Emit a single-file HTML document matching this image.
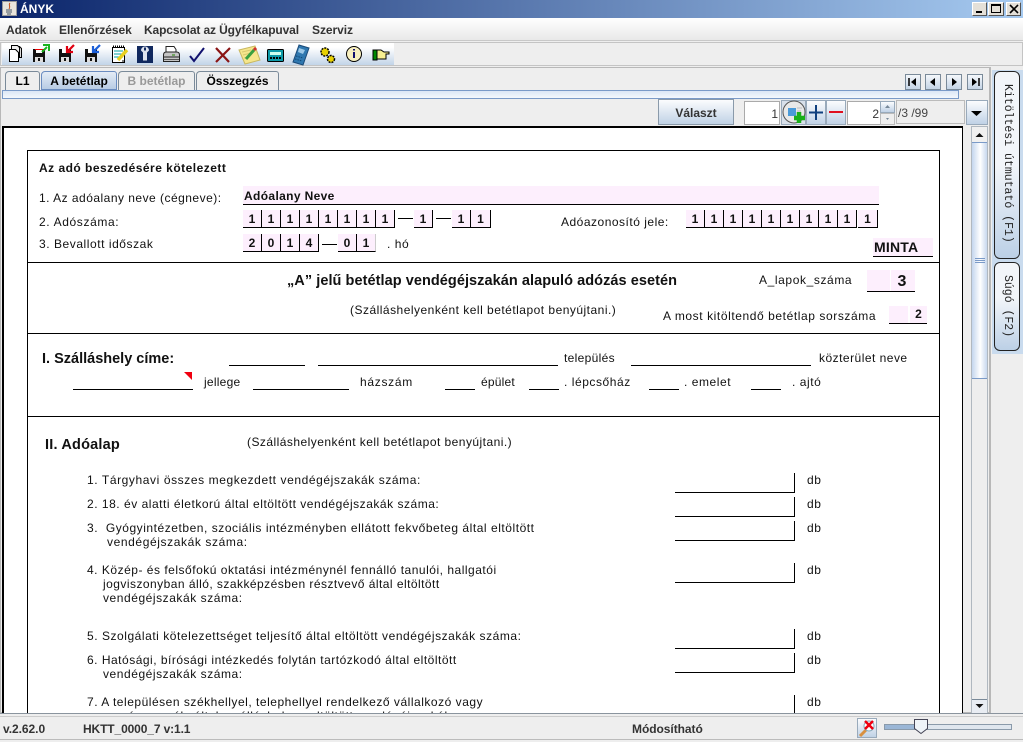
<!DOCTYPE html>
<html lang="hu"><head><meta charset="utf-8"><title>ÁNYK</title>
<style>
html,body{margin:0;padding:0}
body{width:1023px;height:742px;overflow:hidden;position:relative;background:#eeeeee;font-family:"Liberation Sans",sans-serif;font-size:12px;color:#000}
div,span,svg{position:absolute;box-sizing:border-box}
.t{white-space:nowrap;line-height:14px;letter-spacing:.55px;color:#111}
.b{font-weight:bold;letter-spacing:0}
.m{white-space:nowrap;font-weight:bold;font-size:12px;color:#333;line-height:14px;top:23px;letter-spacing:-.05px}
.c{background:#fdeffd;border-right:1px solid #000;border-bottom:1px solid #000;width:19px;height:18px;text-align:center;font-weight:bold;font-size:12px;line-height:18px;letter-spacing:0;color:#111}
.u{height:1px;background:#000}
.v{width:1px;background:#000}
.d{width:15px;height:1px;background:#000}
.n{width:16px;height:16px;top:74px;background:linear-gradient(#f4f7fb,#c4d4e6);border:1px solid #7a8a99}
.tab{height:20px;top:71px;border:1px solid #7a8a99;border-bottom:0;font-weight:bold;font-size:12px;line-height:19px;text-align:center;border-radius:4px 3px 0 0;background:#eee}
.g{background:linear-gradient(#fbfcfe,#c0d2e6)}
.vt{writing-mode:vertical-rl;font-family:"Liberation Mono",monospace;font-size:11.5px;white-space:nowrap;color:#222;line-height:14px}
</style></head><body>

<!-- title bar -->
<div style="left:0;top:0;width:1023px;height:18px;background:linear-gradient(90deg,#0a246a,#a6caf0)"></div>
<div style="left:2px;top:1px;width:15px;height:15px;background:#e8e4dc;border:1px solid #999"></div>
<svg style="left:3px;top:2px" width="13" height="13" viewBox="0 0 13 13"><path d="M7 1C5 3 8 4 6 7" stroke="#c5501c" fill="none"/><path d="M3 8h6M3 10h6M4 12h4" stroke="#456" fill="none"/></svg>
<div style="left:20px;top:2px;color:#fff;font-weight:bold;font-size:12px;line-height:14px;white-space:nowrap">ÁNYK</div>
<div style="left:972px;top:2px;width:15px;height:14px;background:#e4e0d8;border:1px solid;border-color:#fff #555 #555 #fff"></div>
<div style="left:976px;top:11px;width:6px;height:2px;background:#000"></div>
<div style="left:988px;top:2px;width:16px;height:14px;background:#e4e0d8;border:1px solid;border-color:#fff #555 #555 #fff"></div>
<div style="left:991px;top:4px;width:10px;height:9px;border:1px solid #000;border-top-width:2px"></div>
<div style="left:1006px;top:2px;width:15px;height:14px;background:#e4e0d8;border:1px solid;border-color:#fff #555 #555 #fff"></div>
<svg style="left:1009px;top:4px" width="10" height="10" viewBox="0 0 10 10"><path d="M1 1L9 9M9 1L1 9" stroke="#000" stroke-width="1.6"/></svg>

<!-- menu -->
<div style="left:0;top:18px;width:1023px;height:23px;background:linear-gradient(#fff,#e9e9e9);border-bottom:1px solid #c8c8c8"></div>
<div class="m" style="left:6px">Adatok</div>
<div class="m" style="left:59px">Ellenőrzések</div>
<div class="m" style="left:144px;letter-spacing:-.12px">Kapcsolat az Ügyfélkapuval</div>
<div class="m" style="left:312px">Szerviz</div>

<!-- toolbar -->
<div style="left:0;top:42px;width:1023px;height:24px;background:#eee;border:1px solid #c4c4c4"></div>
<div style="left:2px;top:43px;width:392px;height:22px;background:linear-gradient(#fff 20%,#c2d4e8)"></div>
<svg style="left:0;top:42px" width="394" height="24" viewBox="0 0 394 24">
<path d="M13.500 4.500h6l2 2v9h-8z" fill="#ddd" stroke="#000"/><path d="M11.500 3.500h6l2 2v9h-8z" fill="#eee" stroke="#000"/><path d="M9.500 7.500h6l3 3v9h-9z" fill="#fff" stroke="#000"/>
<path d="M33 7h12v13H33z" fill="#111"/><path d="M36 7h6v4h-6z" fill="#fff"/><path d="M35 15h8v5h-8z" fill="#ddd"/><path d="M38 16h2v3h-2z" fill="#111"/>
<path d="M35 7.500h8" stroke="#e00"/><path d="M42 10l5-5M43 3h6v6" stroke="#1db31d" stroke-width="2" fill="none"/>
<path d="M59 7h12v13H59z" fill="#111"/><path d="M62 7h6v4h-6z" fill="#fff"/><path d="M61 15h8v5h-8z" fill="#ddd"/><path d="M64 16h2v3h-2z" fill="#111"/>
<path d="M74 3l-6 6M67 4v6h6" stroke="#e00010" stroke-width="2.200" fill="none"/>
<path d="M85 7h12v13H85z" fill="#111"/><path d="M88 7h6v4h-6z" fill="#fff"/><path d="M87 15h8v5h-8z" fill="#ddd"/><path d="M90 16h2v3h-2z" fill="#111"/>
<path d="M100 3l-6 6M93 4v6h6" stroke="#1c5fd8" stroke-width="2.200" fill="none"/>
<path d="M112.500 5.500h12v15h-12z" fill="#fff" stroke="#000"/><path d="M113 4.500h12" stroke="#000" stroke-dasharray="1 1" stroke-width="2"/><path d="M114 9h9M114 12h8M114 15h9" stroke="#00a0a0"/><path d="M118 18l9-10" stroke="#e8d020" stroke-width="3.500"/><path d="M122 19h3" stroke="#000"/>
<rect x="137" y="4" width="16" height="17" fill="#10285e"/><path d="M145 4.500a4 4 0 0 1 4 4l-2 2v8h-4v-8l-2-2a4 4 0 0 1 4-4z" fill="#dfe4ee"/><path d="M144 5.500h2v3h-2z" fill="#10285e"/>
<path d="M166 4.500h8l2 3v4h-10z" fill="#fff" stroke="#222"/><path d="M163.500 13q0-3 3-3h10q3 0 3 3v6.500h-16z" fill="#c4c4c4" stroke="#222"/><path d="M164 15h15" stroke="#222"/><path d="M164 17.500h15" stroke="#555"/><path d="M172 13h3" stroke="#280"/>
<path d="M190 14l4 5 10-13" stroke="#10106e" stroke-width="2" fill="none"/>
<path d="M216 6l13 14M230 6l-14 14" stroke="#8a1414" stroke-width="2.200"/>
<path d="M239 8l16-4 5 14-15 4z" fill="#f6e68c" stroke="#c8b860"/><path d="M242 10l9-2M243 13l8-2M244 16l5-1" stroke="#d8c870"/><path d="M246 17l8-9" stroke="#3aa040" stroke-width="3"/><path d="M254 8l2-2" stroke="#d03030" stroke-width="3"/>
<rect x="267.500" y="7.500" width="16" height="12" rx="1" fill="#0d9aa8" stroke="#000"/><rect x="270" y="10" width="11" height="3" fill="#cfe"/><path d="M270 16h11" stroke="#000" stroke-dasharray="2 1" stroke-width="2"/>
<path d="M299 3l10 3-6 17-10-3z" fill="#2f78b0" stroke="#1a4a78"/><path d="M299 6l6 2-2 4-5-2z" fill="#9cc8e8"/><path d="M296 14l7 2M295 17l7 2" stroke="#104a78" stroke-dasharray="1.500 1"/>
<circle cx="325" cy="10" r="4" fill="#e8d000" stroke="#000" stroke-dasharray="2 1" stroke-width="1.500"/><circle cx="331" cy="17" r="3.500" fill="#e8d000" stroke="#000" stroke-dasharray="2 1" stroke-width="1.500"/>
<circle cx="354" cy="12" r="7.500" fill="#f8f0c0" stroke="#000"/><path d="M354 7v1.500M354 10v6" stroke="#10106e" stroke-width="2"/>
<path d="M373 8h4v10h-4z" fill="#080" stroke="#000"/><path d="M377 8h4l3 2h5v2h-3v5h-9z" fill="#f6ee90" stroke="#000"/>
</svg>

<!-- tabs area -->
<div style="left:0;top:67px;width:990px;height:646px;border:1px solid #b8b8b8"></div>
<div class="tab" style="left:5px;width:35px">L1</div>
<div class="tab" style="left:41px;width:76px;background:linear-gradient(#e4ecf6,#b8cce4);border:1px solid #6a8cc0;height:19px;line-height:18px">A betétlap</div>
<div class="tab" style="left:118px;width:77px;color:#999">B betétlap</div>
<div class="tab" style="left:196px;width:83px">Összegzés</div>
<div style="left:2px;top:90px;width:957px;height:9px;border:1px solid #7a9ac8;background:linear-gradient(#dce7f5,#f4f8fc)"></div>

<div class="n" style="left:905px"></div><svg style="left:905px;top:74px" width="16" height="16"><path d="M4 4v8" stroke="#000" stroke-width="1.500"/><path d="M11 4L6 8l5 4z"/></svg>
<div class="n" style="left:925px"></div><svg style="left:925px;top:74px" width="16" height="16"><path d="M10 4L5 8l5 4z"/></svg>
<div class="n" style="left:946px"></div><svg style="left:946px;top:74px" width="16" height="16"><path d="M6 4l5 4-5 4z"/></svg>
<div class="n" style="left:967px"></div><svg style="left:967px;top:74px" width="16" height="16"><path d="M12 4v8" stroke="#000" stroke-width="1.500"/><path d="M5 4l5 4-5 4z"/></svg>

<div class="g" style="left:658px;top:99px;width:76px;height:26px;border:1px solid #8a9aaa;text-align:center;font-weight:bold;line-height:26px;color:#333">Választ</div>
<div style="left:744px;top:101px;width:36px;height:24px;background:#fff;border:1px solid #aaa;text-align:right;padding-right:1px;line-height:24px;color:#333">1</div>
<div style="left:781px;top:100px;width:25px;height:25px;background:#d8e0ea;border:1px solid #9ab"></div>
<svg style="left:782px;top:100px" width="25" height="25" viewBox="0 0 25 25"><circle cx="12" cy="12" r="11" fill="#e8e8e8" stroke="#555"/><rect x="6" y="8" width="8" height="8" fill="#4a9ad8"/><path d="M15 8h5M15 11h4" stroke="#bbb"/><path d="M17 12v11M12 18h11" stroke="#18b018" stroke-width="4.500"/></svg>
<div class="g" style="left:806px;top:100px;width:20px;height:25px;border:1px solid #9ab"></div>
<svg style="left:806px;top:100px" width="20" height="25"><path d="M3 12.500h14M10 5v15" stroke="#10407e" stroke-width="2"/></svg>
<div class="g" style="left:826px;top:100px;width:20px;height:25px;border:1px solid #9ab"></div>
<div style="left:829px;top:111px;width:14px;height:2px;background:#e01020"></div>
<div style="left:847px;top:101px;width:34px;height:24px;background:#fff;border:1px solid #aaa;text-align:right;padding-right:1px;line-height:24px;color:#333">2</div>
<div class="g" style="left:880px;top:101px;width:15px;height:12px;border:1px solid #9ab"></div><svg style="left:880px;top:101px" width="15" height="12"><path d="M5 7l2.500-3 2.500 3z" fill="#789"/></svg>
<div style="left:880px;top:113px;width:15px;height:12px;border:1px solid #bbb;background:#eee"></div><svg style="left:880px;top:113px" width="15" height="12"><path d="M6 5l1.500 2 1.500-2z" fill="#789"/></svg>
<div style="left:896px;top:100px;width:69px;height:24px;border:1px solid #bbb;line-height:24px;padding-left:1px;color:#444">/3 /99</div>
<div class="g" style="left:966px;top:100px;width:22px;height:25px;border:1px solid #9ab"></div>
<svg style="left:966px;top:100px" width="22" height="25"><path d="M5 11h11l-5.500 5z"/></svg>

<!-- page -->
<div style="left:2px;top:126px;width:961px;height:587px;background:#fff;border:1px solid #000;border-width:2px 1px 0 2px"></div>
<div style="left:27px;top:150px;width:913px;height:563px;border:1px solid #000;border-bottom:0"></div>
<div class="u" style="left:27px;top:262px;width:913px"></div>
<div class="u" style="left:27px;top:333px;width:913px"></div>
<div class="u" style="left:27px;top:416px;width:913px"></div>

<div class="t b" style="left:39px;top:161px;letter-spacing:.48px">Az adó beszedésére kötelezett</div>
<div class="t" style="left:39px;top:191px;letter-spacing:.48px">1. Az adóalany neve (cégneve):</div>
<div style="left:243px;top:186px;width:636px;height:19px;background:#fdeffd;border-bottom:1px solid #000"></div>
<div class="t b" style="left:244px;top:189px;letter-spacing:.36px">Adóalany Neve</div>

<div class="t" style="left:39px;top:215px;letter-spacing:.63px">2. Adószáma:</div>
<div class="c" style="left:243px;top:210px">1</div><div class="c" style="left:262px;top:210px">1</div><div class="c" style="left:281px;top:210px">1</div><div class="c" style="left:300px;top:210px">1</div><div class="c" style="left:319px;top:210px">1</div><div class="c" style="left:338px;top:210px">1</div><div class="c" style="left:357px;top:210px">1</div><div class="c" style="left:376px;top:210px">1</div>
<div class="d" style="left:398px;top:218px"></div>
<div class="c" style="left:414px;top:210px">1</div>
<div class="d" style="left:436px;top:218px"></div>
<div class="c" style="left:452px;top:210px">1</div><div class="c" style="left:471px;top:210px;width:20px">1</div>

<div class="t" style="left:561px;top:215px;letter-spacing:.5px">Adóazonosító jele:</div>
<div class="c" style="left:686px;top:210px">1</div><div class="c" style="left:705px;top:210px">1</div><div class="c" style="left:724px;top:210px">1</div><div class="c" style="left:743px;top:210px">1</div><div class="c" style="left:762px;top:210px">1</div><div class="c" style="left:781px;top:210px">1</div><div class="c" style="left:800px;top:210px">1</div><div class="c" style="left:819px;top:210px">1</div><div class="c" style="left:838px;top:210px">1</div><div class="c" style="left:858px;top:210px;width:20px">1</div>

<div class="t" style="left:39px;top:237px">3. Bevallott időszak</div>
<div class="c" style="left:243px;top:234px">2</div><div class="c" style="left:262px;top:234px">0</div><div class="c" style="left:281px;top:234px">1</div><div class="c" style="left:300px;top:234px">4</div>
<div class="d" style="left:322px;top:244px"></div>
<div class="c" style="left:338px;top:234px">0</div><div class="c" style="left:357px;top:234px;border-right-color:#ccc">1</div>
<div class="t" style="left:387px;top:237px">. hó</div>
<div style="left:873px;top:238px;width:60px;height:19px;background:#fdeffd;border-bottom:1px solid #000;font-weight:bold;font-size:14px;line-height:19px;padding-left:1px;color:#111;letter-spacing:.2px">MINTA</div>

<div class="t b" style="left:287px;top:274px;font-size:14.500px;letter-spacing:.06px">„A” jelű betétlap vendégéjszakán alapuló adózás esetén</div>
<div class="t" style="left:759px;top:273px;letter-spacing:.6px">A_lapok_száma</div>
<div style="left:867px;top:270px;width:48px;height:22px;background:#fdeffd;border-bottom:1px solid #000"></div>
<div style="left:890px;top:270px;width:1px;height:21px;background:#fff"></div>
<div style="left:891px;top:272px;width:22px;text-align:center;font-weight:bold;font-size:16px;line-height:20px;color:#111">3</div>
<div class="t" style="left:350px;top:303px;letter-spacing:.485px">(Szálláshelyenként kell betétlapot benyújtani.)</div>
<div class="t" style="left:663px;top:309px;letter-spacing:.58px">A most kitöltendő betétlap sorszáma</div>
<div style="left:889px;top:306px;width:38px;height:18px;background:#fdeffd;border-bottom:1px solid #000"></div>
<div style="left:908px;top:306px;width:2px;height:17px;background:#fff"></div>
<div style="left:910px;top:307px;width:17px;text-align:center;font-weight:bold;line-height:15px;color:#111">2</div>

<div class="t b" style="left:42px;top:352px;font-size:14.500px">I. Szálláshely címe:</div>
<div class="u" style="left:229px;top:365px;width:76px"></div>
<div class="u" style="left:318px;top:365px;width:240px"></div>
<div class="t" style="left:564px;top:351px;letter-spacing:.33px">település</div>
<div class="u" style="left:631px;top:365px;width:180px"></div>
<div class="t" style="left:819px;top:351px;letter-spacing:.48px">közterület neve</div>
<div class="u" style="left:73px;top:389px;width:120px"></div>
<svg style="left:184px;top:372px" width="9" height="8"><path d="M0 0h8v8z" fill="#f00010"/></svg>
<div class="t" style="left:204px;top:375px;letter-spacing:.25px">jellege</div>
<div class="u" style="left:253px;top:389px;width:96px"></div>
<div class="t" style="left:360px;top:375px;letter-spacing:.7px">házszám</div>
<div class="u" style="left:445px;top:389px;width:30px"></div>
<div class="t" style="left:481px;top:375px;letter-spacing:.2px">épület</div>
<div class="u" style="left:529px;top:389px;width:30px"></div>
<div class="t" style="left:564px;top:375px">. lépcsőház</div>
<div class="u" style="left:649px;top:389px;width:30px"></div>
<div class="t" style="left:684px;top:375px">. emelet</div>
<div class="u" style="left:751px;top:389px;width:30px"></div>
<div class="t" style="left:792px;top:375px">. ajtó</div>

<div class="t b" style="left:45px;top:438px;font-size:14.500px;letter-spacing:.2px">II. Adóalap</div>
<div class="t" style="left:247px;top:435px;letter-spacing:.46px">(Szálláshelyenként kell betétlapot benyújtani.)</div>

<div class="t" style="left:87px;top:473px;letter-spacing:.59px">1. Tárgyhavi összes megkezdett vendégéjszakák száma:</div>
<div class="u" style="left:675px;top:492px;width:120px"></div><div class="v" style="left:794px;top:473px;height:20px"></div><div class="t" style="left:807px;top:473px">db</div>
<div class="t" style="left:87px;top:497px;letter-spacing:.52px">2. 18. év alatti életkorú által eltöltött vendégéjszakák száma:</div>
<div class="u" style="left:675px;top:516px;width:120px"></div><div class="v" style="left:794px;top:497px;height:20px"></div><div class="t" style="left:807px;top:497px">db</div>
<div class="t" style="left:87px;top:521px;letter-spacing:.54px">3.&nbsp; Gyógyintézetben, szociális intézményben ellátott fekvőbeteg által eltöltött</div>
<div class="t" style="left:107px;top:535px;letter-spacing:.6px">vendégéjszakák száma:</div>
<div class="u" style="left:675px;top:540px;width:120px"></div><div class="v" style="left:794px;top:521px;height:20px"></div><div class="t" style="left:807px;top:521px">db</div>
<div class="t" style="left:87px;top:563px;letter-spacing:.51px">4. Közép- és felsőfokú oktatási intézménynél fennálló tanulói, hallgatói</div>
<div class="t" style="left:103px;top:577px;letter-spacing:.46px">jogviszonyban álló, szakképzésben résztvevő által eltöltött</div>
<div class="t" style="left:103px;top:591px">vendégéjszakák száma:</div>
<div class="u" style="left:675px;top:582px;width:120px"></div><div class="v" style="left:794px;top:563px;height:20px"></div><div class="t" style="left:807px;top:563px">db</div>
<div class="t" style="left:87px;top:629px;letter-spacing:.54px">5. Szolgálati kötelezettséget teljesítő által eltöltött vendégéjszakák száma:</div>
<div class="u" style="left:675px;top:648px;width:120px"></div><div class="v" style="left:794px;top:629px;height:20px"></div><div class="t" style="left:807px;top:629px">db</div>
<div class="t" style="left:87px;top:653px;letter-spacing:.5px">6. Hatósági, bírósági intézkedés folytán tartózkodó által eltöltött</div>
<div class="t" style="left:103px;top:667px">vendégéjszakák száma:</div>
<div class="u" style="left:675px;top:672px;width:120px"></div><div class="v" style="left:794px;top:653px;height:20px"></div><div class="t" style="left:807px;top:653px">db</div>
<div class="t" style="left:87px;top:695px;letter-spacing:.52px">7. A településen székhellyel, telephellyel rendelkező vállalkozó vagy</div>
<div class="v" style="left:794px;top:695px;height:18px"></div><div class="t" style="left:807px;top:695px">db</div>
<div class="t" style="left:103px;top:709px;height:4px;overflow:hidden">magánszemély által, szálláshelyen eltöltött vendégéjszakák</div>

<!-- scrollbar -->
<div style="left:971px;top:126px;width:17px;height:587px;background:#eee;border:1px solid #b0b8c0"></div>
<div style="left:972px;top:127px;width:15px;height:15px;background:#f0f0f0"></div>
<svg style="left:972px;top:127px" width="15" height="15"><path d="M3.500 10h8l-4-4z" fill="#111"/></svg>
<div style="left:972px;top:142px;width:15px;height:237px;background:linear-gradient(90deg,#c4d6ee,#fff 55%,#c8d8ee);border:1px solid #7a9ac8;border-width:1px 0"></div>
<div style="left:975px;top:258px;width:10px;height:1px;background:#7a9ac8"></div>
<div style="left:975px;top:260px;width:10px;height:1px;background:#7a9ac8"></div>
<div style="left:975px;top:262px;width:10px;height:1px;background:#7a9ac8"></div>
<div style="left:972px;top:699px;width:15px;height:14px;background:#e8ecf2;border-top:1px solid #7a8a99"></div>
<svg style="left:972px;top:699px" width="15" height="14"><path d="M3.500 5h8l-4 4z" fill="#111"/></svg>

<!-- right panel -->
<div style="left:990px;top:67px;width:1px;height:646px;background:#b8b8b8"></div>
<div style="left:992px;top:70px;width:31px;height:194px;background:#c9dbee"></div>
<div style="left:994px;top:71px;width:26px;height:188px;background:linear-gradient(#f2f5f9 50%,#bcd0e6);border:1px solid #222;border-radius:6px"></div>
<div class="vt" style="left:1000px;top:84px">Kitöltési útmutató (F1)</div>
<div style="left:992px;top:261px;width:31px;height:93px;background:#c9dbee"></div>
<div style="left:994px;top:262px;width:26px;height:89px;background:linear-gradient(#f2f5f9 40%,#bcd0e6);border:1px solid #222;border-radius:6px"></div>
<div class="vt" style="left:1000px;top:275px">Súgó (F2)</div>

<!-- status bar -->
<div style="left:0;top:713px;width:1023px;height:1px;background:#8a949e"></div>
<div style="left:0;top:716px;width:1023px;height:24px;border-top:1px solid #ccc;border-bottom:1px solid #bbb"></div>
<div class="m" style="left:3px;top:722px">v.2.62.0</div>
<div class="m" style="left:83px;top:722px;letter-spacing:-.12px">HKTT_0000_7 v:1.1</div>
<div class="m" style="left:632px;top:722px">Módosítható</div>
<div class="g" style="left:857px;top:718px;width:20px;height:20px;border:1px solid #9ab"></div>
<svg style="left:857px;top:718px" width="20" height="20"><path d="M3 18l6-6" stroke="#d89040" stroke-width="3"/><circle cx="12" cy="8" r="5" fill="#fff" stroke="#8ab"/><path d="M8 3l8 8M16 3l-8 8" stroke="#f00010" stroke-width="2.500"/></svg>
<div style="left:884px;top:724px;width:128px;height:6px;background:#dfe6ee;border:1px solid #8a9aaa"></div>
<div style="left:885px;top:725px;width:30px;height:4px;background:#9ab6d6"></div>
<svg style="left:913px;top:718px" width="16" height="17"><path d="M1.500 1.500h13v9l-6.500 5-6.500-5z" fill="#eef3f8" stroke="#445"/></svg>
</body></html>
